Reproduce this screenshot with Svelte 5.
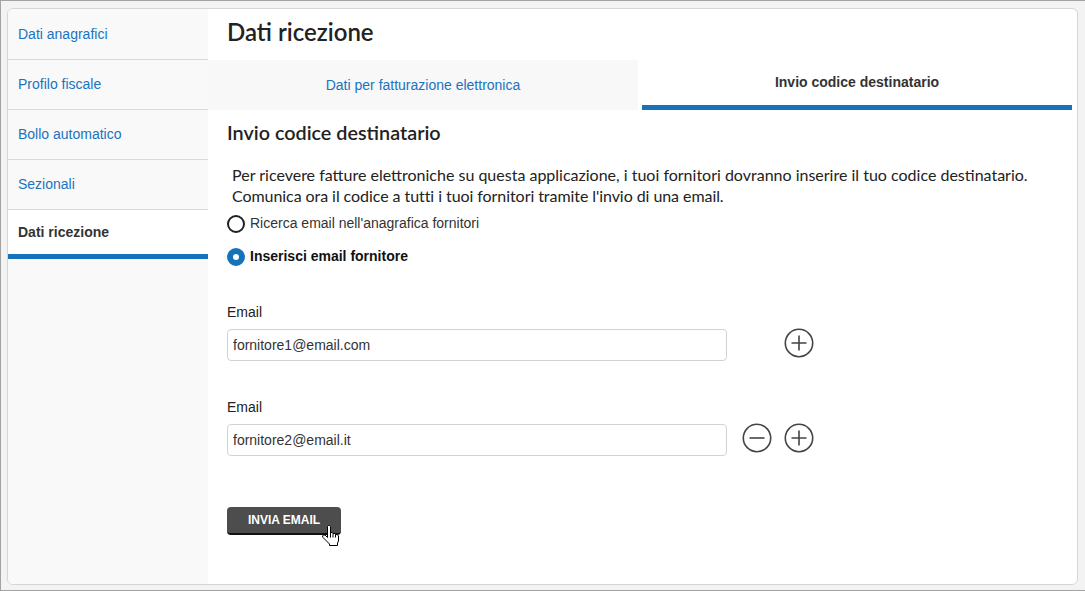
<script>
    let sideItems = ['Dati anagrafici', 'Profilo fiscale', 'Bollo automatico', 'Sezionali'];
    let mode = $state('manual');
    let emails = $state(['fornitore1@email.com', 'fornitore2@email.it']);
</script>

<div class="screen">
    <div class="card">
        <nav class="side">
            {#each sideItems as item}
                <a class="side-item" href="#top">{item}</a>
            {/each}
            <div class="side-active">Dati ricezione</div>
        </nav>
        <main class="content">
            <h1>Dati ricezione</h1>
            <div class="tabs">
                <div class="tab">Dati per fatturazione elettronica</div>
                <div class="tab current">Invio codice destinatario</div>
            </div>
            <div class="panel">
                <h2>Invio codice destinatario</h2>
                <p>Per ricevere fatture elettroniche su questa applicazione, i tuoi fornitori dovranno inserire il tuo codice destinatario.<br /><span class="tight">Comunica ora il codice a tutti i tuoi fornitori tramite l'invio di una email.</span></p>
                <label class="radio first">
                    <input type="radio" name="mode" value="search" bind:group={mode} />
                    <span class="dot"></span>
                    <span>Ricerca email nell'anagrafica fornitori</span>
                </label>
                <label class="radio second">
                    <input type="radio" name="mode" value="manual" bind:group={mode} />
                    <span class="dot"></span>
                    <span>Inserisci email fornitore</span>
                </label>

                {#each emails as email, i}
                    <div class="field">
                        <div class="field-label">Email</div>
                        <div class="field-row">
                            <input class="text" type="text" bind:value={emails[i]} />
                            <div class="actions">
                                {#if i > 0}
                                    <svg class="round" viewBox="0 0 30 30" aria-label="Rimuovi">
                                        <circle cx="15" cy="15" r="13.7" />
                                        <path d="M7.5 15h15" />
                                    </svg>
                                {/if}
                                <svg class="round" viewBox="0 0 30 30" aria-label="Aggiungi">
                                    <circle cx="15" cy="15" r="13.7" />
                                    <path d="M7.5 15h15M15 7.5v15" />
                                </svg>
                            </div>
                        </div>
                    </div>
                {/each}

                <div class="send-wrap">
                    <button class="send">INVIA EMAIL</button>
                    <svg class="cursor" viewBox="0 0 17 21" aria-hidden="true">
                        <path d="M5.500 1.500 6.500.5h1l1 1v6h2l.5 1h2l.5 1H15l1.500 1.500v5l-1 2v2.500h-8V19L1 12.500.5 11l1-1H3l2.500 2.500z" />
                        <path class="fingers" d="M8.500 7.500v5M11 8.500v4M13.500 9.500v3" />
                    </svg>
                </div>
            </div>
        </main>
    </div>
</div>

<style>
    :global(body) {
        margin: 0;
    }

    .screen {
        box-sizing: border-box;
        width: 1085px;
        height: 591px;
        padding: 7px 7px 5px 6px;
        background: #f3f3f3;
        border: 1px solid #a3a3a3;
        border-right: 0;
        font-family: "Liberation Sans", Arial, sans-serif;
        font-size: 14px;
        color: #333;
    }

    .card {
        box-sizing: border-box;
        height: 100%;
        display: flex;
        background: #fff;
        border: 1px solid #d6d6d6;
        border-radius: 6px;
        overflow: hidden;
    }

    .side {
        flex: 0 0 200px;
        background: #f9f9f9;
    }

    .side-item {
        box-sizing: border-box;
        display: block;
        height: 50px;
        padding: 16px 10px 0;
        color: #1a73c0;
        text-decoration: none;
        line-height: 16px;
        border-bottom: 1px solid #d9d9d9;
    }

    .side-item:first-child {
        height: 51px;
        padding-top: 17px;
    }

    .side-active {
        box-sizing: border-box;
        height: 49px;
        padding: 14px 10px 0;
        line-height: 16px;
        font-weight: bold;
        background: #fff;
        border-bottom: 5px solid #1673ba;
    }

    .content {
        flex: 1;
        min-width: 0;
    }

    h1 {
        margin: 0;
        height: 51px;
        padding: 8px 0 0 19px;
        box-sizing: border-box;
        font-family: Lato, sans-serif;
        font-size: 24px;
        font-weight: 600;
        line-height: 30px;
        color: #222;
    }

    .tabs {
        display: flex;
        gap: 4px;
        width: 864px;
        height: 50px;
    }

    .tab {
        flex: 1;
        box-sizing: border-box;
        text-align: center;
        padding-top: 17px;
        line-height: 16px;
        color: #1a73c0;
        background: #f8f8f8;
    }

    .tab.current {
        padding-top: 14px;
        color: #333;
        font-weight: bold;
        background: #fff;
        border-bottom: 5px solid #1673ba;
    }

    .panel {
        padding: 0 19px;
    }

    h2 {
        margin: 0;
        padding-top: 10px;
        font-family: Lato, sans-serif;
        font-size: 19.800px;
        font-weight: 600;
        line-height: 25px;
        color: #222;
    }

    p {
        margin: 19px 0 0 5px;
        font-family: Lato, sans-serif;
        font-size: 16px;
        line-height: 21px;
        color: #222;
    }

    .tight {
        letter-spacing: -0.065px;
    }

    .radio {
        display: flex;
        align-items: center;
        gap: 5px;
        height: 18px;
        color: #333;
    }

    .radio.first {
        margin-top: 9px;
    }

    .radio.second {
        margin-top: 15px;
        font-weight: bold;
        color: #111;
    }

    .radio span:last-child {
        position: relative;
        top: -1px;
    }

    .radio input {
        position: absolute;
        opacity: 0;
        margin: 0;
    }

    .dot {
        box-sizing: border-box;
        width: 18px;
        height: 18px;
        border: 2px solid #222;
        border-radius: 50%;
        background: #fff;
    }

    .radio input:checked + .dot {
        border: 6px solid #1673ba;
    }

    .field {
        margin-top: 38px;
    }

    .field-label {
        line-height: 16px;
        color: #222;
    }

    .field-row {
        display: flex;
        align-items: center;
        margin-top: 8px;
    }

    .text {
        box-sizing: border-box;
        width: 500px;
        height: 32px;
        padding: 0 5px;
        border: 1px solid #d2d2d2;
        border-radius: 4px;
        font: 14px "Liberation Sans", Arial, sans-serif;
        color: #333;
        outline: none;
    }

    .actions {
        flex: 0 0 87px;
        display: flex;
        justify-content: flex-end;
        gap: 12px;
        margin-bottom: 3px;
    }

    .round {
        width: 30px;
        height: 30px;
        fill: none;
        stroke: #444;
        stroke-width: 1.600;
    }

    .send-wrap {
        position: relative;
        width: 114px;
        margin-top: 51px;
    }

    .send {
        display: block;
        box-sizing: border-box;
        width: 114px;
        height: 28px;
        padding: 0;
        border: 0;
        border-bottom: 2px solid #111;
        border-radius: 4px;
        background: #4d4d4d;
        color: #fff;
        font: bold 12px "Liberation Sans", Arial, sans-serif;
    }

    .cursor {
        position: absolute;
        left: 95px;
        top: 18px;
        width: 17px;
        height: 21px;
        fill: #fff;
        stroke: #000;
        stroke-width: 1;
    }

    .cursor .fingers {
        fill: none;
    }
</style>
